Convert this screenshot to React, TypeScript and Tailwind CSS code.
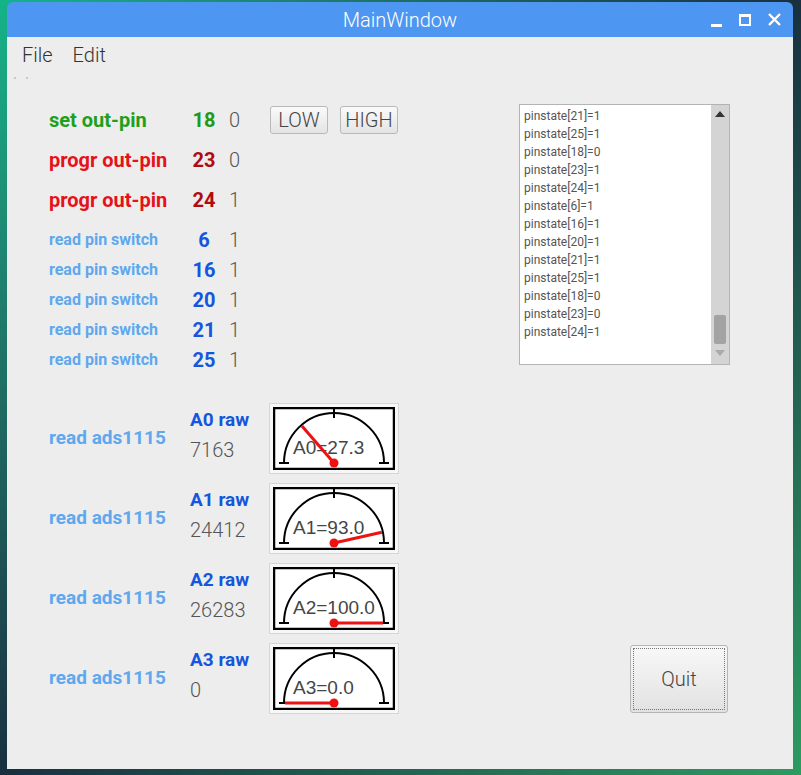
import React from 'react';

const font = { fontFamily: 'Roboto, "Noto Sans", sans-serif' };

const pinRows = [
  { pin: '6', val: '1' },
  { pin: '16', val: '1' },
  { pin: '20', val: '1' },
  { pin: '21', val: '1' },
  { pin: '25', val: '1' },
];

const adsRows = [
  { ch: 'A0', raw: '7163', value: 27.3 },
  { ch: 'A1', raw: '24412', value: 93.0 },
  { ch: 'A2', raw: '26283', value: 100.0 },
  { ch: 'A3', raw: '0', value: 0.0 },
];

const logLines = [
  'pinstate[21]=1',
  'pinstate[25]=1',
  'pinstate[18]=0',
  'pinstate[23]=1',
  'pinstate[24]=1',
  'pinstate[6]=1',
  'pinstate[16]=1',
  'pinstate[20]=1',
  'pinstate[21]=1',
  'pinstate[25]=1',
  'pinstate[18]=0',
  'pinstate[23]=0',
  'pinstate[24]=1',
];

function Gauge({ label, value }: { label: string; value: number }) {
  const cx = 61;
  const cy = 56;
  const r = 50;
  const len = 49;
  const a = Math.PI * (1 - value / 100);
  const nx = cx + len * Math.cos(a);
  const ny = cy - len * Math.sin(a);

  return (
    <div className="w-[130px] h-[71px] border border-[#d6d6d6] bg-[#f7f7f7] p-[3px]">
      <svg width="122" height="63" viewBox="0 0 122 63" className="block">
        <rect x="1" y="1" width="120" height="61" fill="#fff" stroke="#000" strokeWidth="2.5" />
        <path d={`M ${cx - r} ${cy} A ${r} ${r} 0 0 1 ${cx + r} ${cy}`} fill="none" stroke="#000" strokeWidth="2" />
        <line x1={cx} y1="1" x2={cx} y2="11" stroke="#000" strokeWidth="2" />
        <line x1={cx - r - 5} y1={cy} x2={cx - r + 5} y2={cy} stroke="#000" strokeWidth="2" />
        <line x1={cx + r - 5} y1={cy} x2={cx + r + 5} y2={cy} stroke="#000" strokeWidth="2" />
        <text
          x="20"
          y="47"
          fontSize="19"
          fill="#454545"
          style={{ fontFamily: '"Liberation Sans", Arial, sans-serif' }}
        >
          {label}
        </text>
        <line x1={cx} y1={cy} x2={nx} y2={ny} stroke="#ee1111" strokeWidth="3" />
        <circle cx={cx} cy={cy} r="4.5" fill="#ee1111" />
      </svg>
    </div>
  );
}

function QtButton({ children }: { children: React.ReactNode }) {
  return (
    <button className="w-[58px] h-[28px] rounded-[3px] border border-[#b9b9b9] bg-linear-to-b from-[#fafafa] to-[#e4e4e4] text-[20px] font-light leading-none text-[#444] flex items-center justify-center">
      {children}
    </button>
  );
}

export default function App() {
  return (
    <div
      className="min-h-screen w-full pt-[2px] pl-[7px] bg-linear-to-br from-[#14b488] via-[#183040] to-[#2c9c60]"
      style={font}
    >
      <div className="w-[786px] h-[767px] flex flex-col">
        {/* title bar */}
        <div className="h-[35px] rounded-t-[6px] bg-[#4d96f2] flex items-center relative">
          <div className="flex-1 text-center text-white text-[20px] font-light">MainWindow</div>
          <div className="absolute right-[12px] top-0 h-full flex items-center gap-[17px]">
            <div className="w-[11px] h-[3px] bg-white mt-[12px]" />
            <div className="w-[12px] h-[12px] border-2 border-white border-t-[3px]" />
            <svg width="13" height="13" viewBox="0 0 13 13">
              <path d="M1 1 L12 12 M12 1 L1 12" stroke="#fff" strokeWidth="2.4" />
            </svg>
          </div>
        </div>

        {/* window body */}
        <div className="flex-1 bg-[#ededed] flex flex-col">
          <div className="h-[36px] flex items-center pl-[15px] gap-[20px] text-[20px] font-light text-[#333]">
            <span>File</span>
            <span>Edit</span>
          </div>
          <div className="h-[9px] flex items-center pl-[7px] gap-[10px]">
            <div className="w-[2px] h-[2px] bg-[#c8c8c8]" />
            <div className="w-[2px] h-[2px] bg-[#c8c8c8]" />
          </div>

          <div className="flex pt-[18px]">
            {/* left column */}
            <div className="w-[512px] pl-[42px] flex flex-col">
              <div className="h-[40px] flex items-center">
                <span className="w-[140px] text-[20px] font-bold text-[#1fa01c]">set out-pin</span>
                <span className="w-[30px] text-center text-[20px] font-bold text-[#1d9a1a]">18</span>
                <span className="w-[51px] pl-[10px] text-[20px] font-light text-[#555]">0</span>
                <div className="flex gap-[12px]">
                  <QtButton>LOW</QtButton>
                  <QtButton>HIGH</QtButton>
                </div>
              </div>
              <div className="h-[40px] flex items-center">
                <span className="w-[140px] text-[20px] font-bold text-[#e5121a]">progr out-pin</span>
                <span className="w-[30px] text-center text-[20px] font-bold text-[#b00c0c]">23</span>
                <span className="pl-[10px] text-[20px] font-light text-[#555]">0</span>
              </div>
              <div className="h-[40px] flex items-center">
                <span className="w-[140px] text-[20px] font-bold text-[#e5121a]">progr out-pin</span>
                <span className="w-[30px] text-center text-[20px] font-bold text-[#b00c0c]">24</span>
                <span className="pl-[10px] text-[20px] font-light text-[#555]">1</span>
              </div>

              <div className="mt-[5px] flex flex-col">
                {pinRows.map((row, i) => (
                  <div key={i} className="h-[30px] flex items-center">
                    <span className="w-[140px] text-[16px] font-bold text-[#5ea8ee]">read pin switch</span>
                    <span className="w-[30px] text-center text-[20px] font-bold text-[#1656dd]">{row.pin}</span>
                    <span className="pl-[10px] text-[20px] font-light text-[#555]">{row.val}</span>
                  </div>
                ))}
              </div>

              <div className="mt-[23px] flex flex-col">
                {adsRows.map((row) => (
                  <div key={row.ch} className="h-[80px] flex items-center">
                    <span className="w-[141px] text-[19px] font-bold text-[#5ea8ee]">read ads1115</span>
                    <div className="w-[79px] flex flex-col pb-[6px]">
                      <span className="h-[30px] leading-[30px] text-[19px] font-bold text-[#1656dd]">{row.ch} raw</span>
                      <span className="h-[30px] leading-[30px] text-[20px] font-light text-[#555]">{row.raw}</span>
                    </div>
                    <Gauge label={`${row.ch}=${row.value.toFixed(1)}`} value={row.value} />
                  </div>
                ))}
              </div>
            </div>

            {/* right column */}
            <div className="flex flex-col">
              <div className="mt-[4px] w-[211px] h-[261px] border border-[#b4b4b4] bg-white flex">
                <div className="flex-1 pl-[4px] pt-[2px] text-[12px] text-[#555]">
                  {logLines.map((l, i) => (
                    <div key={i} className="h-[18px] leading-[18px]">
                      {l}
                    </div>
                  ))}
                </div>
                <div className="w-[18px] bg-[#d4d4d4] flex flex-col items-center">
                  <svg width="10" height="6" viewBox="0 0 10 6" className="mt-[6px]">
                    <path d="M0 6 L5 0 L10 6 Z" fill="#333" />
                  </svg>
                  <div className="flex-1" />
                  <div className="w-[12px] h-[29px] rounded-[2px] bg-[#a3a3a3]" />
                  <svg width="10" height="6" viewBox="0 0 10 6" className="mt-[6px] mb-[8px]">
                    <path d="M0 0 L10 0 L5 6 Z" fill="#aaa" />
                  </svg>
                </div>
              </div>

              <button className="mt-[280px] ml-[111px] w-[98px] h-[68px] rounded-[3px] border border-[#b5b5b5] bg-linear-to-b from-[#f8f8f8] to-[#e2e2e2] p-[2px]">
                <div className="w-full h-full border border-dotted border-[#777] flex items-center justify-center text-[20px] font-light text-[#444]">
                  Quit
                </div>
              </button>
            </div>
          </div>
        </div>
      </div>
    </div>
  );
}
